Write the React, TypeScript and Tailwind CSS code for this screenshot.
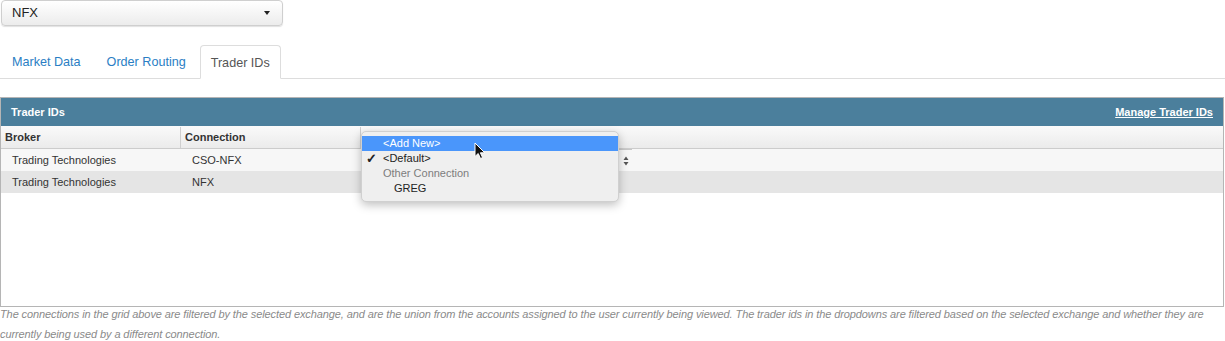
import { useState } from "react";

const rows = [
	{ broker: "Trading Technologies", connection: "CSO-NFX" },
	{ broker: "Trading Technologies", connection: "NFX" },
];

export default function App() {
	const [tab, setTab] = useState("Trader IDs");
	const tabs = ["Market Data", "Order Routing", "Trader IDs"];

	return (
		<div className="relative w-[1225px] h-[341px] overflow-hidden bg-white font-['Liberation_Sans',Helvetica,Arial,sans-serif] text-[#333]">
			{/* Exchange select */}
			<div className="ml-[1px] flex h-[26px] w-[282px] items-center justify-between rounded-[4px] border border-[#cfcfcf] bg-gradient-to-b from-[#ffffff] to-[#ececec] pl-[10px] pr-[12px] text-[13px] text-[#222] shadow-[0_1px_1px_rgba(0,0,0,0.12)]">
				<span>NFX</span>
				<span className="h-0 w-0 border-x-[3.5px] border-t-[4px] border-x-transparent border-t-[#222]" />
			</div>

			{/* Tabs */}
			<div className="mt-[19px] flex h-[34px] gap-[2px] border-b border-[#dddddd]">
				{tabs.map((t) => (
					<button
						key={t}
						onClick={() => setTab(t)}
						className={
							t === tab
								? "-mb-px rounded-t-[4px] border border-[#dddddd] border-b-white bg-white px-[10px] pt-[2px] text-[12.6px] text-[#555]"
								: "px-[12px] pt-[2px] text-[12.6px] text-[#2a7ec4]"
						}
					>
						{t}
					</button>
				))}
			</div>

			{/* Panel */}
			<div className="mt-[18px] h-[210px] w-[1224px] border border-[#b5b5b5] bg-white">
				<div className="flex h-[28px] items-center justify-between bg-[#4b7f9c] px-[10px] text-[11px] font-bold text-white">
					<span>Trader IDs</span>
					<span className="underline">Manage Trader IDs</span>
				</div>
				<div className="flex h-[23px] border-b border-[#cccccc] bg-gradient-to-b from-[#fafafa] to-[#ebebeb] pt-[1px] text-[11px] font-bold text-[#333]">
					<div className="flex w-[180px] items-center border-r border-[#cfcfcf] px-[4px]">Broker</div>
					<div className="flex w-[180px] items-center border-r border-[#cfcfcf] px-[4px]">Connection</div>
					<div className="flex-1" />
				</div>
				{rows.map((r, i) => (
					<div key={i} className={`flex h-[22px] items-center text-[11px] text-[#333] ${i === 0 ? "bg-[#f7f7f7]" : "bg-[#e5e5e5]"}`}>
						<div className="w-[180px] pl-[11px]">{r.broker}</div>
						<div className="w-[180px] pl-[11px]">{r.connection}</div>
						{i === 0 && (
							<div className="flex h-[22px] w-[271px] items-center justify-end border-t border-[#c8c8c8] bg-[#f7f7f7] pr-[3px]">
								<svg width="6" height="10" viewBox="0 0 6 10">
									<path d="M3 0.5 L5.5 4 L0.5 4 Z M3 9.5 L5.5 6 L0.5 6 Z" fill="#555" />
								</svg>
							</div>
						)}
					</div>
				))}
			</div>

			{/* Footer note */}
			<p className="-mt-[3px] text-[11px] italic leading-[20px] tracking-[-0.1px] text-[#8a8a8a]">
				The connections in the grid above are filtered by the selected exchange, and are the union from the accounts assigned to the user currently being viewed. The trader ids in the dropdowns are filtered based on the selected exchange and whether they are currently being used by a different connection.
			</p>

			{/* Open dropdown menu */}
			<div className="absolute left-[361px] top-[131px] w-[258px] rounded-[5px] border border-[#d0d0d0] bg-[#efefef] pb-[5px] pt-[4px] text-[11px] text-[#222] shadow-[0_3px_10px_rgba(0,0,0,0.25)]">
				<div className="flex h-[15px] items-center bg-[#4a96fb] pl-[21px] text-white">&lt;Add New&gt;</div>
				<div className="relative flex h-[15px] items-center pl-[21px]">
					<span className="absolute left-[4px] text-[13px] font-bold leading-none">✓</span>
					&lt;Default&gt;
				</div>
				<div className="flex h-[15px] items-center pl-[21px] text-[#7d7d7d]">Other Connection</div>
				<div className="flex h-[15px] items-center pl-[32px]">GREG</div>
			</div>

			{/* Mouse cursor */}
			<svg className="absolute left-[474px] top-[142px]" width="12" height="18" viewBox="0 0 12 18">
				<path d="M1 1 L1 14.5 L4.2 11.5 L6.5 16.5 L8.6 15.6 L6.4 10.8 L10.8 10.8 Z" fill="#111" stroke="#fff" strokeWidth="1" strokeLinejoin="round" />
			</svg>
		</div>
	);
}
